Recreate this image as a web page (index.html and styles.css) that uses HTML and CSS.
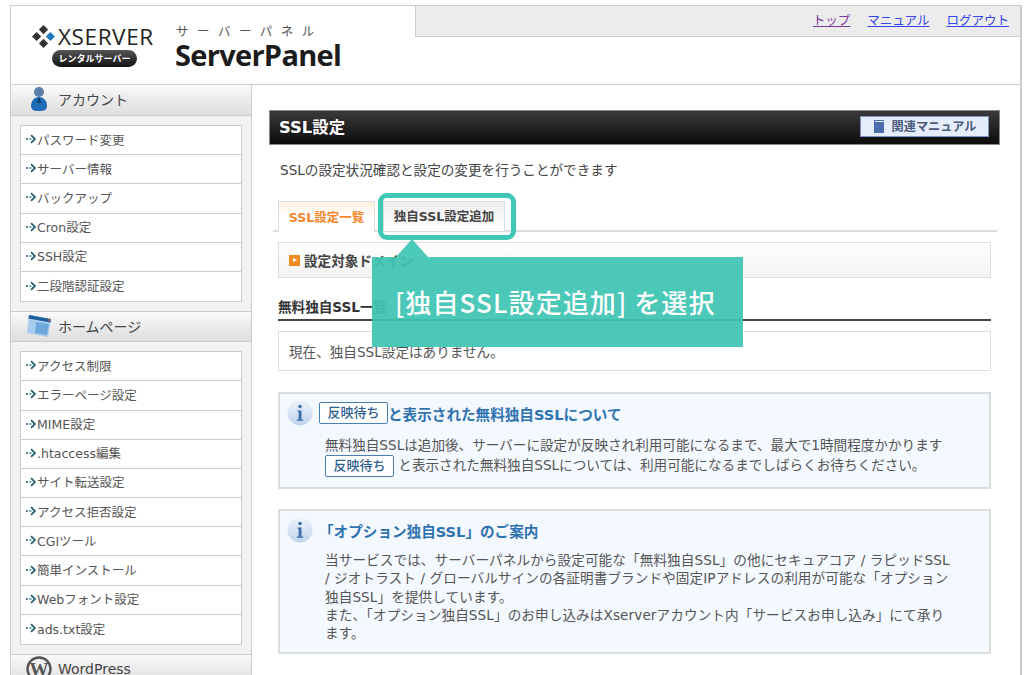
FILE: index.html
```html
<!DOCTYPE html>
<html lang="ja">
<head>
<meta charset="utf-8">
<title>SSL設定</title>
<link rel="stylesheet" href="styles.css">
</head>
<body>
<svg class="defs" width="0" height="0" aria-hidden="true">
  <symbol id="bullet" viewBox="0 0 12 10">
    <rect x="0" y="4" width="2" height="2" fill="#3f6f78"/>
    <path d="M5.5 .8L9.7 5 5.5 9.2" fill="none" stroke="#2a6473" stroke-width="2"/>
    <rect x="3.4" y="4" width="2.6" height="2" fill="#6fa6b0"/>
  </symbol>
  <symbol id="info" viewBox="0 0 26 26">
    <circle cx="13" cy="13" r="12.5" fill="url(#infog)"/>
    <circle cx="13" cy="6.5" r="1.8" fill="#3f6ea8"/>
    <path d="M10.5 10.5h4v9h1.6v1.3H9.8v-1.3h1.8v-7.7h-1.1z" fill="#3f6ea8"/>
  </symbol>
  <defs>
    <linearGradient id="infog" x1="0" y1="0" x2="0" y2="1">
      <stop offset="0" stop-color="#eef3fb"/>
      <stop offset="1" stop-color="#bfd3ee"/>
    </linearGradient>
  </defs>
</svg>
<div class="page">
  <header class="header">
    <div class="logo">
      <div class="brand">
        <div class="brand-top">
          <svg class="diamonds" viewBox="0 0 22 22" width="23" height="23">
            <path d="M11 0l4.4 4.4-4.4 4.4-4.4-4.4z" fill="#333"/>
            <path d="M4.4 6.6l4.4 4.4-4.4 4.4L0 11z" fill="#333"/>
            <path d="M17.6 6.6L22 11l-4.4 4.4-4.4-4.4z" fill="#1f78c0"/>
            <path d="M11 13.2l4.4 4.4-4.4 4.4-4.4-4.4z" fill="#333"/>
          </svg>
          <span class="brand-name">XSERVER</span>
        </div>
        <span class="pill">レンタルサーバー</span>
      </div>
      <div class="product">
        <span class="product-kana">サーバーパネル</span>
        <span class="product-name">ServerPanel</span>
      </div>
    </div>
    <nav class="topnav">
      <a class="visited" href="#">トップ</a>
      <a href="#">マニュアル</a>
      <a href="#">ログアウト</a>
    </nav>
  </header>
  <div class="body">
    <aside class="sidebar">
      <h2 class="side-title">
        <svg class="side-icon" viewBox="0 0 24 26" width="24" height="26">
          <circle cx="12" cy="6" r="5" fill="#5a7fa8"/>
          <path d="M12 11c-5 0-8 4-8 9 0 4 3 5 8 5s8-1 8-5c0-5-3-9-8-9z" fill="#1f6cb8"/>
          <path d="M12 11l-2.5 6h5z" fill="#123f70"/>
        </svg>
        アカウント
      </h2>
      <ul class="menu">
        <li><svg class="bl"><use href="#bullet"/></svg>パスワード変更</li>
        <li><svg class="bl"><use href="#bullet"/></svg>サーバー情報</li>
        <li><svg class="bl"><use href="#bullet"/></svg>バックアップ</li>
        <li><svg class="bl"><use href="#bullet"/></svg>Cron設定</li>
        <li><svg class="bl"><use href="#bullet"/></svg>SSH設定</li>
        <li><svg class="bl"><use href="#bullet"/></svg>二段階認証設定</li>
      </ul>
      <h2 class="side-title">
        <svg class="side-icon" viewBox="0 0 26 24" width="26" height="24">
          <path d="M3 1l22 4-3 18L1 19z" fill="#a9cdee"/>
          <path d="M3 1l22 4-.6 3.4L2.3 4.5z" fill="#1f5f9e"/>
          <path d="M10 8l13 2-2 11-12-2z" fill="#6fa8dc"/>
          <circle cx="23" cy="6" r="1" fill="#d9543a"/>
        </svg>
        ホームページ
      </h2>
      <ul class="menu">
        <li><svg class="bl"><use href="#bullet"/></svg>アクセス制限</li>
        <li><svg class="bl"><use href="#bullet"/></svg>エラーページ設定</li>
        <li><svg class="bl"><use href="#bullet"/></svg>MIME設定</li>
        <li><svg class="bl"><use href="#bullet"/></svg>.htaccess編集</li>
        <li><svg class="bl"><use href="#bullet"/></svg>サイト転送設定</li>
        <li><svg class="bl"><use href="#bullet"/></svg>アクセス拒否設定</li>
        <li><svg class="bl"><use href="#bullet"/></svg>CGIツール</li>
        <li><svg class="bl"><use href="#bullet"/></svg>簡単インストール</li>
        <li><svg class="bl"><use href="#bullet"/></svg>Webフォント設定</li>
        <li><svg class="bl"><use href="#bullet"/></svg>ads.txt設定</li>
      </ul>
      <h2 class="side-title">
        <svg class="side-icon" viewBox="0 0 26 26" width="26" height="26">
          <circle cx="13" cy="13" r="11.5" fill="none" stroke="#555" stroke-width="2.4"/>
          <text x="13" y="20" text-anchor="middle" class="wp-w">W</text>
        </svg>
        WordPress
      </h2>
    </aside>
    <main class="content">
      <div class="title-bar">
        <h1>SSL設定</h1>
        <a class="manual" href="#">
          <svg viewBox="0 0 12 14" width="12" height="14"><path d="M1 1h10v1H2v1h9v11H1z" fill="#4d6cae"/></svg>
          関連マニュアル
        </a>
      </div>
      <p class="lead">SSLの設定状況確認と設定の変更を行うことができます</p>
      <div class="tabs">
        <span class="tab active">SSL設定一覧</span>
        <span class="tab">独自SSL設定追加</span>
      </div>
      <div class="domain"><span class="marker"></span>設定対象ドメイン</div>
      <h3 class="section">無料独自SSL一覧</h3>
      <div class="notice">現在、独自SSL設定はありません。</div>
      <section class="info first">
        <h4><svg class="info-icon"><use href="#info"/></svg><span class="badge">反映待ち</span>と表示された無料独自SSLについて</h4>
        <p>無料独自SSLは追加後、サーバーに設定が反映され利用可能になるまで、最大で1時間程度かかります<br><span class="badge inline">反映待ち</span> と表示された無料独自SSLについては、利用可能になるまでしばらくお待ちください。</p>
      </section>
      <section class="info second">
        <h4><svg class="info-icon"><use href="#info"/></svg><span>「オプション独自SSL」のご案内</span></h4>
        <p>当サービスでは、サーバーパネルから設定可能な「無料独自SSL」の他にセキュアコア / ラピッドSSL<br>/ ジオトラスト / グローバルサインの各証明書ブランドや固定IPアドレスの利用が可能な「オプション<br>独自SSL」を提供しています。<br>また、「オプション独自SSL」のお申し込みはXserverアカウント内「サービスお申し込み」にて承り<br>ます。</p>
      </section>
    </main>
  </div>
</div>
<div class="callout-ring"></div>
<div class="callout-arrow"></div>
<div class="callout">[独自SSL設定追加] を選択</div>
</body>
</html>
```
FILE: styles.css
```css
* { box-sizing: border-box; }
html, body { margin: 0; padding: 0; height: 675px; overflow: hidden; background: #fff; }
body {
  position: relative;
  font-family: "DejaVu Sans", "Noto Sans CJK JP", sans-serif;
  font-size: 13.6px;
  color: #555;
}
.defs { position: absolute; }
.page {
  margin: 5px 0 0 10px;
  width: 1012px;
  height: 700px;
  border: 1px solid #ccc;
  border-width: 1px 2px 0 1px;
}
.header {
  height: 79px;
  display: flex;
  justify-content: space-between;
  align-items: flex-start;
  border-bottom: 1px solid #ccc;
}
.logo { display: flex; padding: 17px 0 0 21px; gap: 21px; }
.brand { display: flex; flex-direction: column; align-items: flex-start; width: 122px; }
.brand-top { display: flex; align-items: center; gap: 3px; height: 27px; }
.brand-name { font: 400 22.5px "Open Sans", sans-serif; color: #222; letter-spacing: .6px; }
.pill {
  width: 85px; height: 17px; margin: 0 0 0 20px;
  border-radius: 9px;
  background: linear-gradient(#555, #111);
  color: #fff;
  font: 700 9px/17px "Noto Sans CJK JP", sans-serif;
  text-align: center;
}
.product { display: flex; flex-direction: column; margin-top: -1px; }
.product-kana { font: 400 12.5px/18px "Noto Sans CJK JP", sans-serif; letter-spacing: 8.5px; color: #555; padding-left: 1px; }
.product-name { font: 700 29px/30px "Open Sans", sans-serif; color: #1c1c1c; letter-spacing: -.7px; }
.topnav {
  width: 605px; height: 31px;
  background: #ececec;
  border-left: 1px solid #ccc;
  border-bottom: 1px solid #ccc;
  display: flex;
  justify-content: flex-end;
  gap: 17px;
  padding: 6px 11px 0 0;
  font-size: 12.5px;
  line-height: 18px;
}
.topnav a { color: #3344ee; }
.topnav a.visited { color: #7a3a9a; }
.body { display: flex; }
.sidebar {
  width: 241px; flex: none;
  background: #f2f2f2;
  border-right: 1px solid #ccc;
  height: 600px;
  font-size: 12.5px;
}
.side-title {
  margin: 0;
  height: 31px;
  display: flex;
  align-items: center;
  gap: 6px;
  padding: 0 0 2px 15px;
  font-size: 14px;
  font-weight: 400;
  color: #444;
  background: linear-gradient(#fafafa, #e8e8e8 60%, #dfdfdf);
  border-bottom: 1px solid #ccc;
}
.menu + .side-title { border-top: 1px solid #ccc; }
.side-icon { flex: none; width: 26px; }
.wp-w { font: 700 19px "Liberation Serif", serif; fill: #555; }
.menu {
  list-style: none;
  margin: 9px 9px 9px;
  padding: 0;
  background: #fff;
  border: 1px solid #ccc;
}
.menu li {
  height: 29.2px;
  display: flex;
  align-items: center;
  padding: 0 0 2px 5px;
  border-bottom: 1px solid #ccc;
  color: #555;
  white-space: nowrap;
}
.menu li:last-child { border-bottom: 0; }
.bl { width: 11px; height: 10px; flex: none; }
.content { flex: 1; padding: 25px 20px 0 17px; min-width: 0; white-space: nowrap; }
.title-bar {
  height: 35px;
  background: linear-gradient(#3a3a3a, #0c0c0c);
  border: 1px solid #888;
  display: flex;
  align-items: center;
  justify-content: space-between;
  padding: 0 10px 0 9px;
}
.title-bar h1 { margin: 0 0 3px; font-size: 16.4px; font-weight: 700; color: #fff; }
.manual {
  width: 129px; height: 21px;
  margin-bottom: 3px;
  background: #e6edfa;
  border: 1px solid #7d93c8;
  color: #4a5a7a;
  font-size: 12.2px;
  font-weight: 700;
  display: flex; align-items: center; justify-content: center; gap: 7px;
  text-decoration: none;
}
.lead { margin: 16px 0 0 11px; line-height: 18px; color: #444; }
.tabs {
  margin: 22px 3px 0 4px;
  height: 31px;
  display: flex;
  gap: 8px;
  padding-left: 5px;
  border-bottom: 2px solid #ddd;
}
.tab {
  height: 30px;
  display: flex; align-items: center; justify-content: center;
  font-size: 12.5px;
  font-weight: 700;
  border: 1px solid #ddd;
  border-bottom: 0;
  width: 122px;
  padding-bottom: 2px;
  color: #444;
  background: linear-gradient(#eee, #fff);
}
.tab.active {
  width: 97px;
  color: #f7862a;
  height: 31px;
  background: linear-gradient(#fdf0e0, #fff 50%);
}
.domain {
  margin: 10px 9px 0 9px;
  height: 36px;
  border: 1px solid #ddd;
  background: linear-gradient(#fff, #f2f2f2);
  display: flex; align-items: center;
  padding-left: 10px;
  font-weight: 700;
  color: #444;
}
.marker {
  width: 11px; height: 11px; margin-right: 4px;
  background: #f08a1e;
  position: relative;
}
.marker::after {
  content: ""; position: absolute; left: 4px; top: 3px;
  border-left: 4px solid #fff; border-top: 2.5px solid transparent; border-bottom: 2.5px solid transparent;
}
.section {
  margin: 21px 9px 0 9px;
  height: 22px;
  font-size: 13.6px;
  font-weight: 700;
  color: #333;
  border-bottom: 2px solid #444;
  line-height: 17px;
}
.notice {
  margin: 10px 9px 0 9px;
  height: 40px;
  border: 1px solid #ddd;
  padding-left: 10px;
  display: flex; align-items: center;
}
.info {
  margin: 21px 9px 0 9px;
  background: #f4f8ff;
  border: 2px solid #ddd;
  padding: 6px 0 0 7px;
}
.info.first { height: 97px; }
.info.second { height: 145px; margin-top: 20px; }
.info h4 {
  margin: 0;
  display: flex; align-items: center;
  height: 26px;
  font-size: 14.6px;
  font-weight: 700;
  color: #2f72b0;
}
.info-icon { width: 26px; height: 26px; flex: none; margin-right: 6px; }
.badge {
  display: inline-block;
  width: 69px; height: 22px;
  line-height: 20px;
  text-align: center;
  border: 1px solid #4a80b8;
  border-radius: 2px;
  background: #fff;
  color: #2f5f90;
  font-size: 13px;
  font-weight: 500;
}
.info p { margin: 0 0 0 38px; color: #555; }
.info.first p { margin-top: 9px; line-height: 20px; }
.info.second p { margin-top: 8px; line-height: 18.3px; letter-spacing: .1px; }
.badge.inline { vertical-align: middle; margin: -2px 0; }
.callout-ring {
  position: absolute;
  left: 378px; top: 193px;
  width: 138px; height: 47px;
  border: 5px solid #41c7b6;
  border-radius: 9px;
}
.callout-arrow {
  position: absolute;
  left: 396px; top: 239px;
  border-left: 16px solid transparent;
  border-right: 16px solid transparent;
  border-bottom: 18px solid #41c7b6;
  opacity: .95;
}
.callout {
  position: absolute;
  left: 372px; top: 257px;
  width: 371px; height: 90px;
  background: rgba(62, 196, 179, .93);
  color: #fff;
  font: 500 26px/90px "Noto Sans CJK JP", sans-serif;
  padding-left: 23px;
  letter-spacing: 1.1px;
  white-space: nowrap;
}
```
